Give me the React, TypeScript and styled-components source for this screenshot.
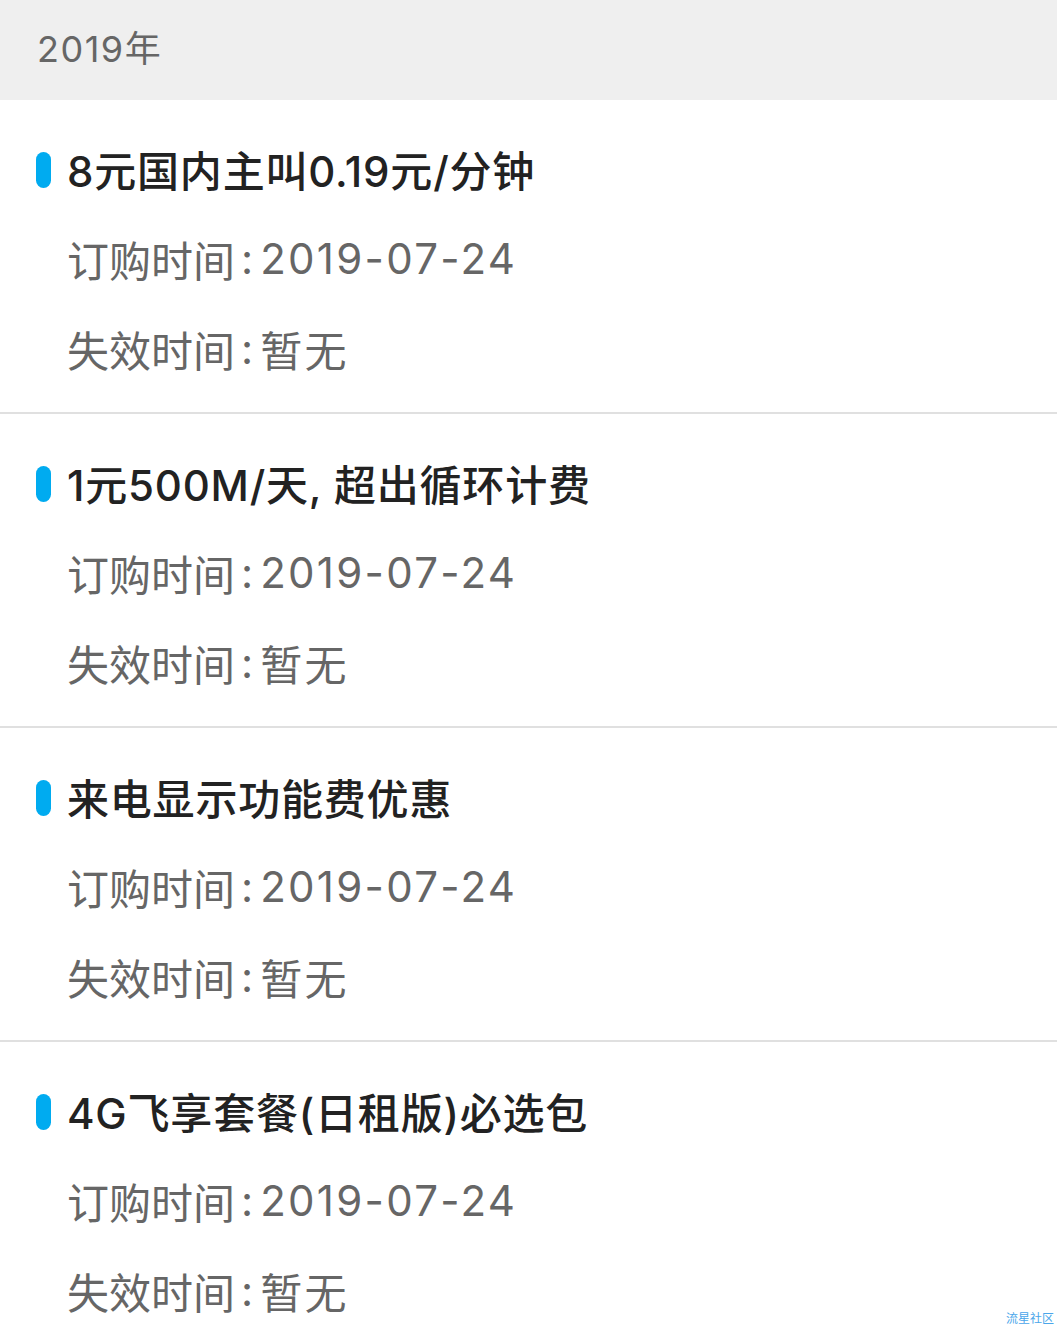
import React from 'react'
import styled, { createGlobalStyle } from 'styled-components'

const GlobalStyle = createGlobalStyle`
  html, body {
    margin: 0;
    padding: 0;
    background: #ffffff;
  }
  body {
    font-family: Inter, "Noto Sans CJK SC", sans-serif;
  }
`

type Pack = {
  name: string
  orderDate: string
  expire: string
}

const packs: Pack[] = [
  { name: '8元国内主叫0.19元/分钟', orderDate: '2019-07-24', expire: '暂无' },
  { name: '1元500M/天, 超出循环计费', orderDate: '2019-07-24', expire: '暂无' },
  { name: '来电显示功能费优惠', orderDate: '2019-07-24', expire: '暂无' },
  { name: '4G飞享套餐(日租版)必选包', orderDate: '2019-07-24', expire: '暂无' },
]

const App = () => {
  return (
    <Page>
      <GlobalStyle />
      <YearBar>2019年</YearBar>
      <List>
        {packs.map((p, i) => (
          <Item key={i} last={i === packs.length - 1}>
            <TitleRow>
              <Pill />
              <Title>{p.name}</Title>
            </TitleRow>
            <InfoRow>
              <Label>订购时间</Label>
              <Colon>:</Colon>
              <Value>{p.orderDate}</Value>
            </InfoRow>
            <InfoRow>
              <Label>失效时间</Label>
              <Colon>:</Colon>
              <Value>{p.expire}</Value>
            </InfoRow>
          </Item>
        ))}
      </List>
      <Watermark>流星社区</Watermark>
    </Page>
  )
}

export default App

const Page = styled.div`
  position: relative;
  width: 1057px;
  height: 1326px;
  overflow: hidden;
  background: #fff;
`

const YearBar = styled.div`
  height: 100px;
  background: #efefef;
  display: flex;
  align-items: center;
  padding-left: 37px;
  padding-bottom: 8px;
  box-sizing: border-box;
  font-size: 36px;
  letter-spacing: 1.5px;
  color: #666;
`

const List = styled.div`
  display: flex;
  flex-direction: column;
`

const Item = styled.div<{ last?: boolean }>`
  height: 314px;
  box-sizing: border-box;
  padding-top: 23px;
  border-bottom: ${(p) => (p.last ? 'none' : '2px solid #e0e0e0')};
`

const TitleRow = styled.div`
  display: flex;
  align-items: center;
  height: 90px;
  padding-left: 36px;
`

const Pill = styled.div`
  width: 15px;
  height: 36px;
  border-radius: 8px;
  background: #00abf0;
  margin-right: 16px;
  margin-top: 3px;
  flex-shrink: 0;
`

const Title = styled.div`
  font-size: 42px;
  font-weight: 500;
  letter-spacing: 0.8px;
  color: #222;
  white-space: nowrap;
`

const InfoRow = styled.div`
  display: flex;
  align-items: center;
  height: 90px;
  padding-left: 67px;
  font-size: 42px;
  color: #666;
  white-space: nowrap;
`

const Label = styled.span``

const Colon = styled.span`
  margin: 0 7px 0 6px;
`

const Value = styled.span`
  letter-spacing: 2.3px;
`

const Watermark = styled.div`
  position: absolute;
  right: 3px;
  bottom: 0px;
  font-size: 12px;
  line-height: 14px;
  color: #4aa6ea;
`
